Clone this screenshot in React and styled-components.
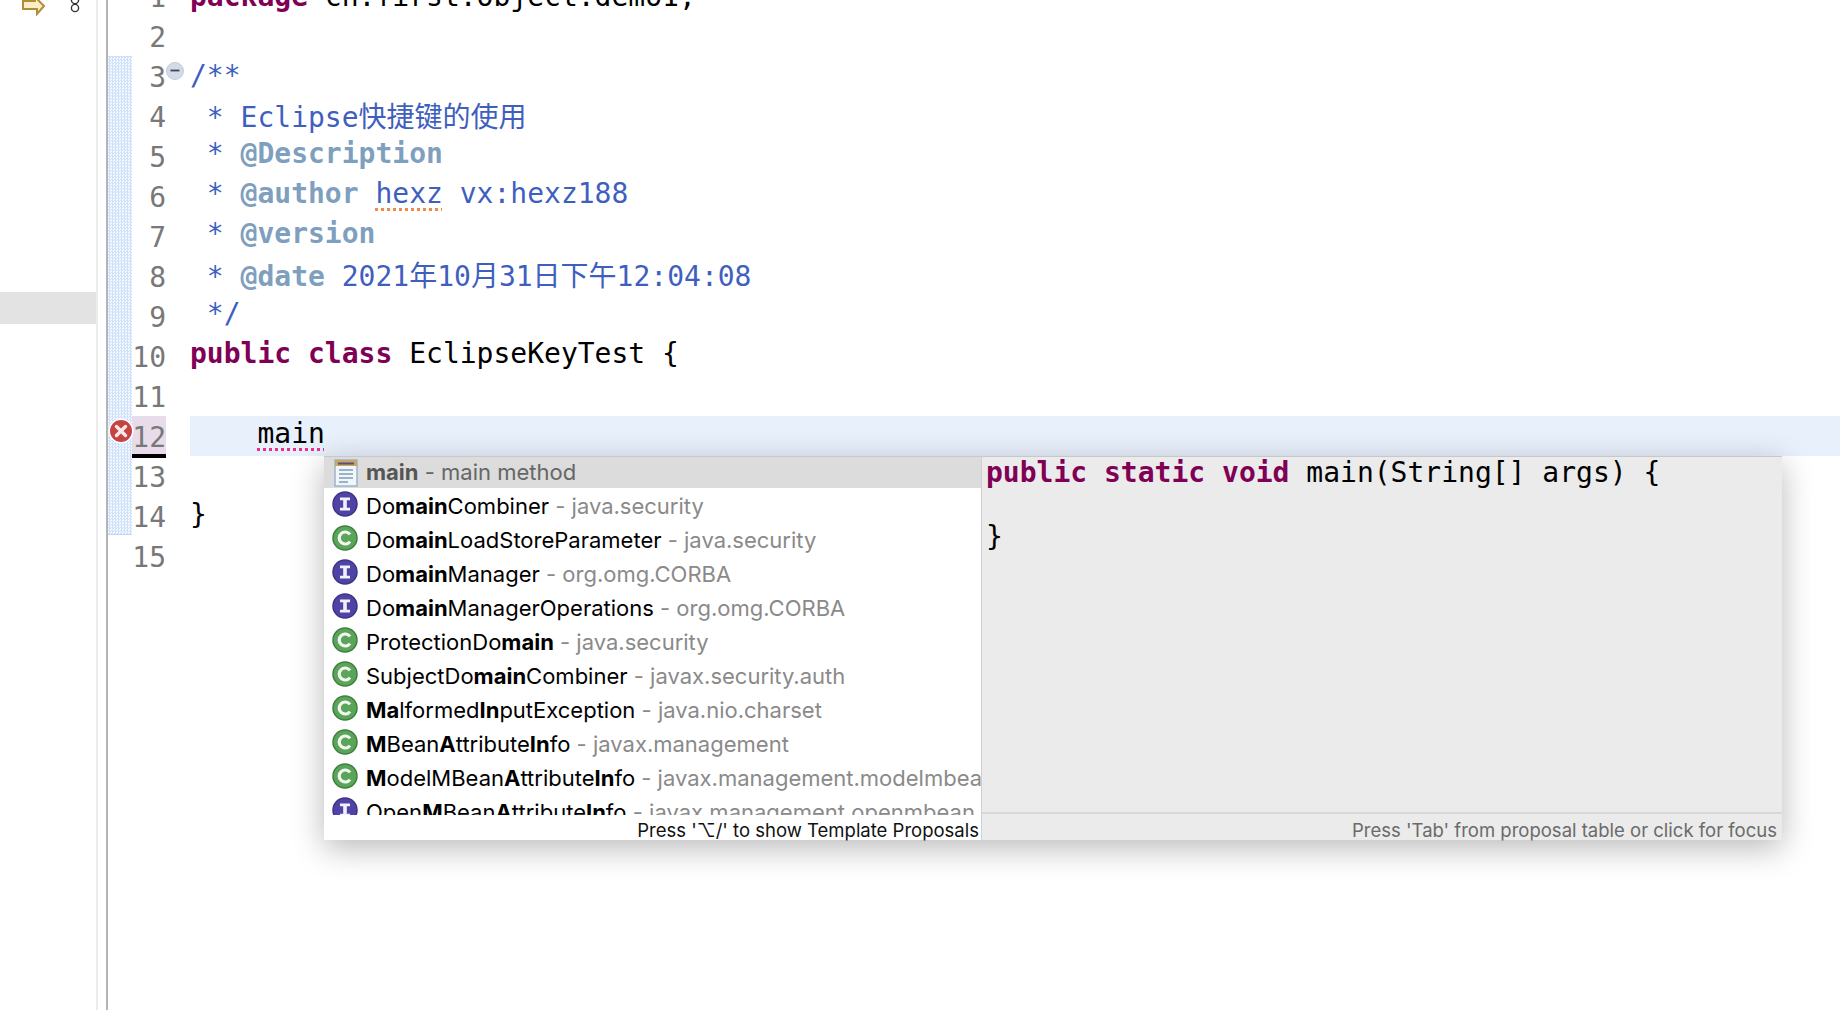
import React from "react";
import styled, { createGlobalStyle } from "styled-components";

const mono = `"DejaVu Sans Mono", "Noto Sans CJK SC", monospace`;
const sans = `Inter, "Liberation Sans", "DejaVu Sans", sans-serif`;

const GlobalStyle = createGlobalStyle`
  html, body {
    margin: 0;
    padding: 0;
    background: #fff;
  }
`;

const Page = styled.div`
  position: relative;
  display: flex;
  width: 1840px;
  height: 1010px;
  overflow: hidden;
  background: #fff;
`;

const Sidebar = styled.aside`
  display: flex;
  flex-direction: column;
  width: 96px;
  flex: none;
  border-right: 2px solid #ececec;
`;

const SideIcons = styled.div`
  display: flex;
  justify-content: space-between;
  height: 16px;
  padding: 0 16px 0 22px;
`;

const SideSelection = styled.div`
  height: 32px;
  margin-top: 276px;
  background: #e3e3e3;
`;

const Sash = styled.div`
  width: 8px;
  flex: none;
  border-right: 2px solid #b4b4b4;
`;

const RulerColumn = styled.div`
  width: 24px;
  flex: none;
`;

const RulerStrip = styled.div`
  height: 479px;
  margin-top: 56px;
  border-top: 1px solid #cfe0fa;
  border-bottom: 1px solid #c3d6f5;
  box-sizing: border-box;
  background-color: #fff;
  background-image: repeating-conic-gradient(#cfe0fb 0 25%, #f4f8ff 0 50%);
  background-size: 3px 3px;
`;

const Editor = styled.main`
  flex: 1;
  margin-top: -24px;
  font: 28px/40px ${mono};
  color: #000;
`;

const Row = styled.div`
  position: relative;
  display: flex;
  height: 40px;
`;

const LineNo = styled.div`
  width: 34px;
  flex: none;
  height: ${(p) => (p.$active ? "38px" : "40px")};
  line-height: 43px;
  text-align: right;
  color: #787878;
  background: ${(p) => (p.$active ? "#e8dcea" : "transparent")};
  border-bottom: ${(p) => (p.$active ? "4px solid #000" : "none")};
`;

const Code = styled.div`
  flex: 1;
  margin-left: 24px;
  white-space: pre;
  line-height: ${(p) => p.$lead}px;
  background: ${(p) => (p.$current ? "#e8f0fc" : "transparent")};
`;

const Keyword = styled.span`
  color: #7f0055;
  font-weight: 700;
`;

const Doc = styled.span`
  color: #3f5fbf;
`;

const DocTag = styled.span`
  color: #7f9fbf;
  font-weight: 700;
`;

const Squiggle = styled.span`
  text-decoration: underline dotted ${(p) => p.$color};
  text-decoration-thickness: 3px;
  text-underline-offset: 5px;
`;

const FoldMark = styled.svg`
  position: absolute;
  left: 34px;
  top: 6px;
`;

const ErrorMark = styled.svg`
  position: absolute;
  left: -24px;
  top: 2px;
`;

const Popup = styled.div`
  position: absolute;
  left: 324px;
  top: 456px;
  display: flex;
  width: 1458px;
  height: 384px;
  box-shadow: 0 8px 30px rgba(0, 0, 0, 0.28);
`;

const ProposalPane = styled.div`
  display: flex;
  flex-direction: column;
  width: 657px;
  flex: none;
  background: #fff;
  border-top: 1px solid #c8c8c8;
  box-sizing: border-box;
`;

const ProposalList = styled.div`
  height: 358px;
  overflow: hidden;
`;

const Proposal = styled.div`
  display: flex;
  align-items: center;
  height: ${(p) => (p.$selected ? "31px" : "34px")};
  padding-left: 8px;
  gap: 8px;
  font: 22px/29px ${sans};
  white-space: nowrap;
  color: ${(p) => (p.$selected ? "#555" : "#000")};
  background: ${(p) => (p.$selected ? "#dcdcdc" : "transparent")};
  svg {
    flex: none;
    margin-top: ${(p) => (p.$selected ? "0" : "-3px")};
    margin-left: ${(p) => (p.$selected ? "2px" : "0")};
  }
`;

const ProposalLabel = styled.span`
  padding-top: ${(p) => (p.$selected ? "0" : "2px")};
`;

const Qualifier = styled.span`
  color: ${(p) => (p.$selected ? "#666" : "#8a8a8a")};
`;

const ProposalStatus = styled.div`
  height: 22px;
  padding: 3px 2px 0 0;
  text-align: right;
  font: 18.5px/25px ${sans};
  color: #111;
`;

const DetailPane = styled.div`
  display: flex;
  flex-direction: column;
  flex: 1;
  background: #ebebeb;
  border-left: 1px solid #d0d0d0;
  border-top: 1px solid #c8c8c8;
  box-sizing: border-box;
`;

const DetailCode = styled.pre`
  flex: 1;
  margin: 0;
  padding-left: 4px;
  font: 28px/32px ${mono};
  color: #000;
`;

const DetailStatus = styled.div`
  height: 23px;
  padding: 3px 5px 0 0;
  border-top: 2px solid #d8d8d8;
  text-align: right;
  font: 18.5px/26px ${sans};
  color: #6a6a6a;
`;

const InterfaceIcon = () => (
  <svg width="26" height="26" viewBox="0 0 26 26">
    <circle cx="13" cy="13" r="12" fill="#4f44a6" stroke="#3d3486" strokeWidth="1.5" />
    <path d="M8 6.5h10v2.8h-3.2v7.4H18v2.8H8v-2.8h3.2V9.3H8z" fill="#f2f0fa" />
  </svg>
);

const ClassIcon = () => (
  <svg width="26" height="26" viewBox="0 0 26 26">
    <circle cx="13" cy="13" r="12" fill="#5ba55b" stroke="#3e7f3e" strokeWidth="1.5" />
    <path d="M18 9.4A6 6 0 1 0 18 16.6" fill="none" stroke="#f2f8f0" strokeWidth="3.2" />
  </svg>
);

const TemplateIcon = () => (
  <svg width="24" height="28" viewBox="0 0 24 28">
    <rect x="1" y="1" width="22" height="26" fill="#f1f6fb" stroke="#9db4c9" strokeWidth="1.5" />
    <rect x="1" y="1" width="22" height="6" fill="#c7a860" />
    <rect x="4" y="3.5" width="16" height="2" fill="#5d4a86" />
    <path d="M5 11h14M5 15h14M5 19h14M5 23h9" stroke="#7f9db8" strokeWidth="1.6" />
  </svg>
);

const icons = { I: InterfaceIcon, C: ClassIcon, T: TemplateIcon };

// bold parts of a proposal name are wrapped in *
const proposals = [
  ["T", "*main*", "main method"],
  ["I", "Do*main*Combiner", "java.security"],
  ["C", "Do*main*LoadStoreParameter", "java.security"],
  ["I", "Do*main*Manager", "org.omg.CORBA"],
  ["I", "Do*main*ManagerOperations", "org.omg.CORBA"],
  ["C", "ProtectionDo*main*", "java.security"],
  ["C", "SubjectDo*main*Combiner", "javax.security.auth"],
  ["C", "*Ma*lformed*In*putException", "java.nio.charset"],
  ["C", "*M*Bean*A*ttribute*In*fo", "javax.management"],
  ["C", "*M*odelMBean*A*ttribute*In*fo", "javax.management.modelmbean"],
  ["I", "Open*M*Bean*A*ttribute*In*fo", "javax.management.openmbean"],
];

const renderName = (name) =>
  name.split("*").map((part, i) => (i % 2 ? <b key={i}>{part}</b> : part));

const lines = [
  <><Keyword>package</Keyword> cn.first.object.demo1;</>,
  null,
  <Doc>/**</Doc>,
  <Doc> * Eclipse快捷键的使用</Doc>,
  <Doc> * <DocTag>@Description</DocTag></Doc>,
  <Doc> * <DocTag>@author</DocTag> <Squiggle $color="#f08a4b">hexz</Squiggle> vx:hexz188</Doc>,
  <Doc> * <DocTag>@version</DocTag></Doc>,
  <Doc> * <DocTag>@date</DocTag> 2021年10月31日下午12:04:08</Doc>,
  <Doc> */</Doc>,
  <><Keyword>public</Keyword> <Keyword>class</Keyword> EclipseKeyTest {"{"}</>,
  null,
  <>    <Squiggle $color="#e8308a">main</Squiggle></>,
  null,
  "}",
  null,
];

const leads = { 0: 42, 2: 40, 3: 44, 7: 42, 13: 38 };

const App = () => (
  <Page>
    <GlobalStyle />
    <Sidebar>
      <SideIcons>
        <svg width="24" height="16" viewBox="0 0 24 16">
          <path d="M1 1h12V-3l9 9-7 8v-5H1z" fill="#fbeec4" stroke="#b08d3c" strokeWidth="2" />
        </svg>
        <svg width="10" height="16" viewBox="0 0 10 16">
          <circle cx="5" cy="0" r="3.6" fill="none" stroke="#333" strokeWidth="1.4" />
          <circle cx="5" cy="8" r="3.6" fill="none" stroke="#333" strokeWidth="1.4" />
        </svg>
      </SideIcons>
      <SideSelection />
    </Sidebar>
    <Sash />
    <RulerColumn>
      <RulerStrip />
    </RulerColumn>
    <Editor>
      {lines.map((line, i) => (
        <Row key={i}>
          <LineNo $active={i === 11}>{i + 1}</LineNo>
          {i === 2 && (
            <FoldMark width="18" height="18" viewBox="0 0 18 18">
              <circle cx="9" cy="9" r="8.5" fill="#d3dbe6" stroke="#c2ccd9" />
              <path d="M4.5 8.5h9" stroke="#445" strokeWidth="1.8" />
            </FoldMark>
          )}
          {i === 11 && (
            <ErrorMark width="26" height="26" viewBox="0 0 26 26">
              <circle cx="13" cy="13" r="12.5" fill="#fff" />
              <circle cx="13" cy="13" r="11" fill="#c74343" />
              <path d="M8.5 8.5l9 9M17.5 8.5l-9 9" stroke="#f8e8e8" strokeWidth="3.4" strokeLinecap="round" />
            </ErrorMark>
          )}
          <Code $current={i === 11} $lead={leads[i] ?? 36}>{line}</Code>
        </Row>
      ))}
    </Editor>
    <Popup>
      <ProposalPane>
        <ProposalList>
          {proposals.map(([kind, name, qualifier], i) => {
            const Icon = icons[kind];
            return (
              <Proposal key={name} $selected={i === 0}>
                <Icon />
                <ProposalLabel $selected={i === 0}>
                  {renderName(name)}
                  <Qualifier $selected={i === 0}> - {qualifier}</Qualifier>
                </ProposalLabel>
              </Proposal>
            );
          })}
        </ProposalList>
        <ProposalStatus>Press '⌥/' to show Template Proposals</ProposalStatus>
      </ProposalPane>
      <DetailPane>
        <DetailCode>
          <Keyword>public</Keyword> <Keyword>static</Keyword> <Keyword>void</Keyword> main(String[] args) {"{"}
          {"\n\n}"}
        </DetailCode>
        <DetailStatus>Press 'Tab' from proposal table or click for focus</DetailStatus>
      </DetailPane>
    </Popup>
  </Page>
);

export default App;
